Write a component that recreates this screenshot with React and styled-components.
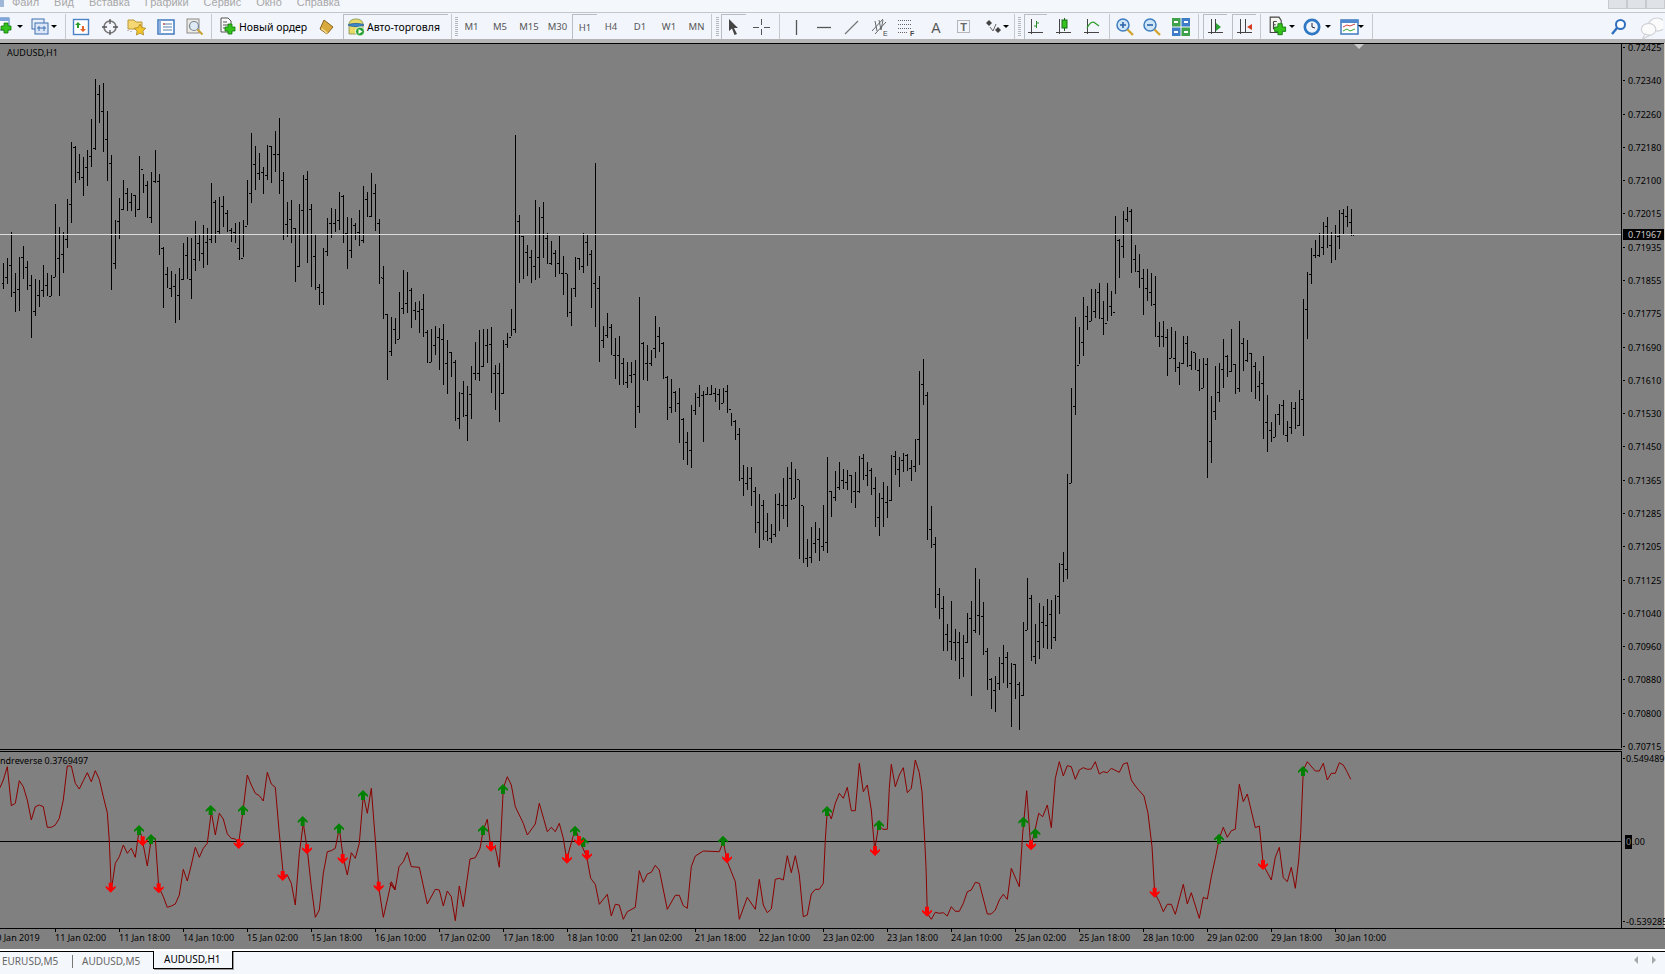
import styled, { createGlobalStyle } from "styled-components";

const GlobalStyle = createGlobalStyle`
  html, body {
    margin: 0;
    padding: 0;
    background: #f4f7fc;
    overflow: hidden;
  }
`;

// hi, lo, close per bar, measured off the reference. y = y0 + value / s
const BAR_TRACES = [
  {
    y0: 60,
    s: 3,
    open: 670,
    rows: [
      610,686,652, 595,673,616, 517,712,697, 640,755,688, 590,752,592, 558,656,620, 603,690,676, 645,833,752,
      657,768,704, 660,740,690, 615,712,675, 640,708,708, 645,708,650, 432,650,595, 502,708,582, 517,638,536,
      418,563,433, 247,490,262, 258,368,337, 282,360,350, 290,407,320, 270,377,288, 178,320,265, 57,270,103,
      75,190,152, 69,275,237, 153,362,310, 285,689,610, 480,626,482, 415,536,448, 360,450,400, 385,452,425,
      398,452,405, 405,470,448, 288,450,328, 343,398,375, 362,475,472, 335,490,362, 270,368,364, 343,584,563,
      562,743,643, 620,685,685, 633,712,678, 642,790,705, 625,780,658, 550,660,585, 530,658,658, 533,716,598,
      483,632,550, 522,602,580, 495,625,547, 503,614,538, 370,550,427, 420,550,512, 410,526,437, 408,502,458,
      450,515,510, 505,545,517, 490,550,565, 487,600,593, 480,592,497, 360,495,400, 220,428,313, 258,390,340,
      278,360,335, 322,402,345, 255,360,257, 258,368,283, 213,335,283, 175,402,360, 337,540,493, 427,530,477,
      420,548,505, 505,665,617, 432,620,450, 345,525,357, 333,610,447, 432,680,588, 522,690,680, 673,734,697,
      565,735,572, 475,587,488, 445,533,490, 447,515,480, 397,510,408, 405,550,520, 470,626,570, 475,595,495,
      490,540,515, 450,558,540, 378,550,418, 395,470,467, 340,470,400, 373,512,490, 478,673,652,
    ],
  },
  {
    y0: 120,
    s: 3,
    open: 473,
    rows: [
      438,597,583, 583,780,694, 590,708,626, 593,673,658, 516,658,565, 450,582,550, 456,580,510, 505,624,570,
      546,600,574, 543,640,567, 522,650,637, 630,728,725, 628,725,676, 618,705,652, 625,750,657, 612,795,730,
      660,822,695, 695,770,725, 720,902,895, 815,927,820, 783,890,885, 797,962,823, 738,898,760, 665,780,760,
      630,782,738, 628,740,675, 628,730,672, 622,818,758, 735,870,760, 728,905,818, 660,822,672, 640,685,650,
      567,648,627, 45,640,303, 285,488,348, 348,477,397, 375,468,412, 390,488,438, 240,480,412, 262,473,290,
      246,413,355, 338,432,428, 362,435,400, 390,470,430, 348,462,458, 407,525,460, 462,590,575,
      505,617,503, 410,530,415, 415,450,438, 338,458,365, 342,437,403, 390,563,490, 130,620,505, 468,725,660,
      617,685,645, 578,655,622, 612,706,705, 655,777,705, 648,795,730, 713,795,785, 725,805,765, 727,790,762,
      720,923,858, 532,878,668, 665,780,730, 675,782,730, 690,738,685, 588,713,648, 620,695,670, 665,778,770, 768,900,862,
      778,880,815, 812,875,848, 805,970,897, 895,1020,967, 935,1035,990, 855,1045,870, 820,885,830, 795,862,825,
      812,967,823, 800,825,822, 795,825,820, 805,845,822, 808,870,850, 805,850,813, 795,880,868, 880,918,902,
      900,960,942, 925,1082,1075, 1035,1127,1090, 1042,1110,1075, 1040,1157,1113, 1100,1240,1205, 1122,1283,1155, 1140,1260,1232,
      1178,1263,1255, 1212,1268,1243, 1122,1250,1153, 1120,1232,1155, 1075,1198,1155, 1040,1222,1075, 1025,1140,1135, 1048,1135,1078,
      1080,1317,1155, 1157,1330,1315, 1258,1342,1312, 1220,1328,1268, 1205,1300,1258, 1225,1322,1278, 1155,1292,1265, 1010,1298,1113,
      1113,1192,1130, 1052,1142,1100, 1025,1110,1080, 1047,1108,1085, 1050,1110,1065, 1065,1148,1113, 1055,1163,1112, 1008,1120,1015,
      1003,1080,1065, 1025,1098,1050, 1045,1125,1105, 1072,1222,1192, 1118,1247,1135, 1087,1220,1145, 1098,1193,1140, 1005,1142,1008,
      993,1065,1047, 1010,1102,1020, 1000,1057,1005, 1003,1052,1045, 1020,1082,1037, 957,1055,958,
    ],
  },
  {
    y0: 190,
    s: 2.85,
    open: 710,
    rows: [
      517,783,552, 482,612,585, 576,997,967, 902,1020,1010, 990,1190,1150, 1133,1222,1190, 1158,1315,1265, 1238,1313,1285,
      1170,1340,1287, 1250,1342,1288, 1260,1393,1335, 1267,1387,1288, 1205,1290,1220, 1170,1442,1255, 1078,1262,1210, 1110,1268,1215,
      1175,1325,1315, 1305,1425,1395, 1390,1480,1425, 1385,1487,1405, 1330,1425,1347, 1297,1405,1330, 1317,1418,1405, 1348,1530,1350,
      1350,1450,1408, 1403,1540,1440, 1230,1442,1255, 1107,1255,1162, 1153,1342,1327, 1237,1350,1285, 1176,1337,1230, 1187,1306,1240,
      1167,1308,1207, 1168,1308,1273, 1155,1285,1158, 1062,1208,1065, 1033,1118,1080, 810,1110,835, 565,835,615, 363,640,500,
      390,495,432, 305,472,360, 332,398,372, 282,372,345, 282,365,292, 265,367,365, 315,412,380, 265,372,332,
      288,358,348, 75,297,143, 140,250,160, 60,195,82, 48,90,60, 55,237,198, 157,235,232, 182,278,252,
      225,355,280, 225,315,292, 237,330,325, 245,418,415, 375,447,415, 373,447,420, 395,530,478, 390,480,480,
      402,518,505, 490,555,492, 417,497,437, 417,505,500, 460,512,462, 465,512,512, 483,572,563, 480,565,495,
      480,820,715, 587,778,630, 503,655,577, 493,603,510, 425,563,472, 470,532,515, 397,518,495, 495,582,563,
      372,575,435, 422,517,485, 428,490,465, 465,575,503, 490,597,560, 517,600,550, 473,710,662, 583,748,685,
      660,717,705, 637,705,638, 610,670,613, 598,697,697, 657,717,675, 605,695,622, 605,680,670, 570,672,597,
      310,700,338, 235,425,240, 165,267,185, 143,195,185, 123,190,163, 90,185,103, 78,165,158, 120,207,125,
      100,200,130, 58,167,65, 55,125,75, 45,105,90, 55,130,127,
    ],
  },
];

function buildBars() {
  const bars = [];
  BAR_TRACES.forEach(({ y0, s, open, rows }) => {
    let prev = y0 + open / s;
    for (let i = 0; i < rows.length; i += 3) {
      const close = y0 + rows[i + 2] / s;
      bars.push({
        x: 3 + bars.length * 4,
        hi: Math.round(y0 + rows[i] / s),
        lo: Math.round(y0 + rows[i + 1] / s),
        open: Math.round(prev),
        close: Math.round(close),
      });
      prev = close;
    }
  });
  return bars;
}

const barsPath = buildBars()
  .map(({ x, hi, lo, open, close }) => {
    const c = x + 0.5;
    return `M${c} ${hi}V${lo}M${c - 1} ${open + 0.5}h-1M${c + 1} ${close + 0.5}h1`;
  })
  .join("");

// indicator line, one list per crop of the reference
const LINE_TRACES = [
  {
    x0: 0,
    y0: 740,
    pts: [0,143,10,120,22,80,34,197,46,190,58,122,70,140,82,180,94,240,106,200,118,195,130,200,142,262,154,262,166,255,178,235,190,180,202,78,214,78,226,130,238,147,250,122,262,98,274,125,286,92,298,118,310,170,322,218,328,303,334,450,346,370,358,350,370,315,382,340,394,325,406,352,418,265,426,295,442,378,454,295,466,295,476,440,490,470,502,502,514,498,526,492,538,465,550,388,562,423,574,375,586,322,598,352,610,325,622,310,634,215,646,285,658,220,670,237,682,282,694,295,706,297,716,310,730,205,742,105,754,135,766,160,778,167,790,183,802,97,814,132,826,142,838,280,850,405,862,405,874,430,886,495,898,340,910,250,922,330,934,440,946,532,958,510,970,400,982,335,994,332,1006,325,1018,265,1030,355,1042,405,1054,338,1066,355,1078,310,1090,165,1102,220,1114,145,1126,300,1136,440,1150,532,1162,480,1174,425,1186,448],
  },
  {
    x0: 390,
    y0: 750,
    pts: [0,400,15,420,27,350,40,335,52,307,64,350,88,352,112,462,136,418,148,420,160,468,172,423,184,440,196,512,208,408,220,470,240,327,256,323,270,295,280,240,292,208,302,290,316,293,328,352,340,115,352,80,364,105,376,170,400,220,412,255,436,222,448,160,472,245,484,232,496,245,508,220,520,265,530,328,556,235,568,270,590,320,602,385,616,403,628,463,652,433,664,498,676,463,688,465,700,508,712,485,736,472,748,362,760,397,772,372,784,367,796,346,808,360,832,478,856,436,868,436,880,467,892,475,904,350,916,318,940,303,988,305,1000,275,1012,335,1024,365,1036,395,1048,508,1072,442,1096,478,1108,388,1120,465,1132,488,1144,477,1156,388,1168,385,1180,390,1192,317,1204,368,1216,317,1228,375,1240,500,1252,495,1264,432,1276,418,1288,418,1300,400,1306,270,1312,180,1324,207,1336,160,1348,130,1360,145,1372,112,1384,182,1396,182,1408,40,1420,125,1432,105,1444,180,1454,300,1466,225,1478,238],
  },
  {
    x0: 880,
    y0: 750,
    pts: [22,238,28,115,34,43,46,110,58,75,70,53,82,128,94,115,106,30,118,68,126,125,134,270,138,350,142,490,154,508,166,487,178,490,190,488,202,498,214,470,226,484,238,484,250,460,262,425,274,420,286,397,298,400,322,492,334,492,346,480,358,450,370,433,382,448,394,355,418,410,428,250,440,122,452,290,464,245,476,190,488,200,502,165,514,233,526,85,538,35,550,78,562,47,574,50,586,88,598,60,610,53,622,58,634,57,646,35,658,72,670,65,682,68,694,55,718,67,730,42,742,38,754,90,766,108,778,122,792,138,804,190,816,290,824,428,838,455,850,485,862,463,874,463,886,493,910,403,922,462,934,428,958,505,970,442,982,447,994,380,1006,325,1018,265,1030,232,1042,262,1054,242,1066,238,1078,103,1090,155,1102,132,1126,233,1138,228,1150,345,1174,390,1186,322,1198,292,1210,383,1222,395,1234,352,1246,415,1256,330,1262,250,1270,60,1282,35,1306,63,1318,63,1330,40,1342,90,1354,70,1366,70,1378,38,1390,45,1402,67,1412,88],
  },
];

const linePoints = LINE_TRACES.flatMap(({ x0, y0, pts }) => {
  const out = [];
  for (let i = 0; i < pts.length; i += 2) {
    out.push(`${(x0 + pts[i] / 3).toFixed(1)},${(y0 + pts[i + 1] / 3).toFixed(1)}`);
  }
  return out;
}).join(" ");

const UP_ARROWS = [
  [0,740,417,270],[0,740,453,297],[0,740,632,210],[0,740,729,210],[0,740,908,243],[0,740,1017,265],[0,740,1089,165],
  [390,750,279,240],[390,750,339,117],[390,750,555,242],[390,750,580,276],[390,750,999,272],[390,750,1311,183],[390,750,1467,225],
  [880,750,430,215],[880,750,466,250],[880,750,1017,266],[880,750,1269,63],
];
const DOWN_ARROWS = [
  [0,740,332,443],[0,740,428,304],[0,740,476,445],[0,740,716,312],[0,740,848,408],[0,740,921,328],[0,740,1028,357],[0,740,1136,440],
  [390,750,303,290],[390,750,531,326],[390,750,567,273],[390,750,591,316],[390,750,1011,325],[390,750,1455,303],
  [880,750,141,485],[880,750,453,286],[880,750,824,428],[880,750,1149,345],
];

const arrowAt = ([x0, y0, x, y]) => `${x0 + x / 3},${y0 + y / 3}`;
const UP_SHAPE = "M0 -5L5 0V2L2 0V5H-2V0L-5 2V0Z";
const DOWN_SHAPE = "M0 5L5 0V-2L2 0V-5H-2V0L-5 -2V0Z";

const PRICES = [
  "0.72425","0.72340","0.72260","0.72180","0.72100","0.72015","0.71935","0.71855","0.71775","0.71690","0.71610",
  "0.71530","0.71450","0.71365","0.71285","0.71205","0.71125","0.71040","0.70960","0.70880","0.70800","0.70715",
];

const TIMES = [
  "10 Jan 2019","11 Jan 02:00","11 Jan 18:00","14 Jan 10:00","15 Jan 02:00","15 Jan 18:00","16 Jan 10:00","17 Jan 02:00",
  "17 Jan 18:00","18 Jan 10:00","21 Jan 02:00","21 Jan 18:00","22 Jan 10:00","23 Jan 02:00","23 Jan 18:00","24 Jan 10:00",
  "25 Jan 02:00","25 Jan 18:00","28 Jan 10:00","29 Jan 02:00","29 Jan 18:00","30 Jan 10:00",
];

const MENU = ["Файл", "Вид", "Вставка", "Графики", "Сервис", "Окно", "Справка"];

const TIMEFRAMES = [
  ["M1", 27], ["M5", 30], ["M15", 28], ["M30", 29], ["H1", 25], ["H4", 28], ["D1", 30], ["W1", 28], ["MN", 27],
];

const Svg = ({ children, size = 20 }) => (
  <svg width={size} height={size} viewBox="0 0 20 20" style={{ flexShrink: 0 }}>
    {children}
  </svg>
);

const Plus = ({ x = 10, y = 10 }) => (
  <path
    d={`M${x + 3} ${y}h4v3h3v4h-3v3h-4v-3h-3v-4h3z`}
    fill="#35c21c"
    stroke="#0f7a0a"
    strokeWidth=".8"
  />
);

const AddChartIcon = () => (
  <Svg>
    <rect x="1" y="1" width="13" height="12" fill="#fff" stroke="#3f6fb0" />
    <rect x="1" y="1" width="13" height="3" fill="#7ea6dc" />
    <Plus x={6} y={6} />
  </Svg>
);
const ProfilesIcon = () => (
  <Svg>
    <rect x="2" y="2" width="12" height="10" fill="#eaf1fb" stroke="#3f6fb0" />
    <rect x="5" y="6" width="13" height="11" fill="#dbe7f8" stroke="#3f6fb0" />
    <path d="M7 11h9M9 9v5M14 9v5" stroke="#3f6fb0" fill="none" />
  </Svg>
);
const MarketIcon = () => (
  <Svg>
    <rect x="2.5" y="2.5" width="15" height="15" fill="#fff" stroke="#4a82c8" strokeWidth="1.4" />
    <path d="M7 5l3 3H8v3H6V8H4z" fill="#2a9d2a" />
    <path d="M12 15l3-3h-2V9h-2v3H9z" fill="#e2622a" />
  </Svg>
);
const TargetIcon = () => (
  <Svg>
    <circle cx="10" cy="10" r="6" fill="none" stroke="#777" strokeWidth="1.6" />
    <path d="M10 2v5M10 13v5M2 10h5M13 10h5" stroke="#555" strokeWidth="1.3" />
  </Svg>
);
const FolderStarIcon = () => (
  <Svg>
    <path d="M1 3h6l2 2h6v7H1z" fill="#f5d774" stroke="#b8963a" />
    <path d="M1 13v2M4 14v2" stroke="#888" strokeDasharray="1 1" />
    <path d="M13 7l1.8 3.6 4 .6-2.9 2.8.7 4-3.6-1.9-3.6 1.9.7-4-2.9-2.8 4-.6z" fill="#f3c52c" stroke="#a98422" strokeWidth=".8" />
  </Svg>
);
const TerminalIcon = () => (
  <Svg>
    <rect x="2" y="3" width="16" height="14" fill="#fff" stroke="#3f78c0" strokeWidth="1.5" />
    <path d="M4 3.5v13" stroke="#8fb2e0" strokeWidth="2" />
    <path d="M7 7h9M7 10h9M7 13h9" stroke="#5a7ea8" />
    <path d="M7 7h2" stroke="#d33" />
  </Svg>
);
const TesterIcon = () => (
  <Svg>
    <rect x="2" y="2" width="12" height="14" fill="#eceae4" stroke="#8a8a8a" />
    <circle cx="9" cy="9" r="4.5" fill="#dfeaf4" stroke="#7b8794" strokeWidth="1.2" />
    <path d="M12.5 12.5l5 5" stroke="#c8a032" strokeWidth="2" />
  </Svg>
);
const OrderIcon = () => (
  <Svg>
    <path d="M2 1h7l3 3v11H2z" fill="#fbfbfb" stroke="#555" />
    <path d="M4 5h4M4 8h6M4 11h3" stroke="#555" />
    <Plus x={6} y={7} />
  </Svg>
);
const EditorIcon = () => (
  <Svg>
    <path d="M7 3l9 7-6 7-7-5z" fill="#d8a93c" stroke="#8a641a" />
    <path d="M4 12l6 5 1-1-6-5z" fill="#f4dc94" />
  </Svg>
);
const AutoIcon = () => (
  <Svg>
    <path d="M3 7c0-3 3-5 7-5s7 2 7 5v10H3z" fill="#e9d96a" stroke="#7e8f50" strokeWidth=".8" />
    <path d="M2 8c2-2 14-2 16 0-3 2-13 2-16 0z" fill="#3f88c8" stroke="#235f99" strokeWidth=".8" />
    <circle cx="14" cy="14.5" r="4.5" fill="#2aa235" stroke="#fff" />
    <path d="M12.5 12l4 2.5-4 2.5z" fill="#fff" />
  </Svg>
);
const CursorIcon = () => (
  <Svg>
    <path d="M5 2l9 9h-4l3 6-2.5 1-2.5-6.5L5 14z" fill="#444" />
  </Svg>
);
const CrossIcon = () => (
  <Svg>
    <path d="M10.5 2v6M10.5 12v6M2 10.5h6M13 10.5h6" stroke="#555" />
  </Svg>
);
const VLineIcon = () => (
  <Svg>
    <path d="M10.5 3v15" stroke="#555" strokeWidth="1.3" />
  </Svg>
);
const HLineIcon = () => (
  <Svg>
    <path d="M3 10.5h14" stroke="#555" strokeWidth="1.3" />
  </Svg>
);
const DiagIcon = () => (
  <Svg>
    <path d="M3 17L16 4" stroke="#777" strokeWidth="1.2" />
  </Svg>
);
const ChannelIcon = () => (
  <Svg>
    <path d="M2 14L13 2M5 17L16 5M5 4l2 10M9 3l2 10M13 3l-2 10" stroke="#666" fill="none" />
    <text x="13" y="19" fontSize="7" fontFamily="Liberation Sans" fill="#444">E</text>
  </Svg>
);
const FiboIcon = () => (
  <Svg>
    <path d="M1 3.5h14M1 7.5h14M1 11.5h14M1 15.5h10" stroke="#666" strokeDasharray="1 1" />
    <text x="13" y="19" fontSize="7" fontWeight="700" fontFamily="Liberation Sans" fill="#444">F</text>
  </Svg>
);
const TextIcon = () => (
  <Svg>
    <text x="10" y="16" fontSize="14" textAnchor="middle" fontFamily="Liberation Sans" fill="#555">A</text>
  </Svg>
);
const LabelIcon = () => (
  <Svg>
    <rect x="3.5" y="3.5" width="12" height="12" fill="none" stroke="#777" strokeDasharray="1 1" />
    <text x="9.5" y="14" fontSize="11" fontWeight="700" textAnchor="middle" fontFamily="Liberation Sans" fill="#666">T</text>
  </Svg>
);
const ShapesIcon = () => (
  <Svg>
    <path d="M5 3l3 3-3 3-3-3z" fill="#444" />
    <path d="M14 10l3 3-3 3-3-3z" fill="#444" />
    <path d="M6 10l3 4 3-7" stroke="#666" fill="none" />
  </Svg>
);
const Axes = () => <path d="M5.5 2v15M2 15.5h15" stroke="#444" fill="none" />;
const BarChartIcon = () => (
  <Svg>
    <Axes />
    <path d="M10.5 4v7M8 9h2M11 6h2" stroke="#2a8c2a" fill="none" />
  </Svg>
);
const CandleIcon = () => (
  <Svg>
    <Axes />
    <path d="M10.5 1v13" stroke="#1a5e1a" />
    <rect x="8" y="3" width="5" height="8" fill="#35c21c" stroke="#1a6e1a" />
  </Svg>
);
const LineChartIcon = () => (
  <Svg>
    <Axes />
    <path d="M5 11c3-6 6-7 8-5l4 3" stroke="#2a9d2a" fill="none" strokeWidth="1.2" />
  </Svg>
);
const Magnifier = ({ sign }) => (
  <Svg>
    <circle cx="8" cy="8" r="6" fill="#cfe5f8" stroke="#3f7dc0" strokeWidth="1.5" />
    <path d={sign === "+" ? "M5 8h6M8 5v6" : "M5 8h6"} stroke="#2c62a6" strokeWidth="1.6" />
    <path d="M12.5 12.5l5.5 5.5" stroke="#d0a532" strokeWidth="2.4" />
  </Svg>
);
const TileIcon = () => (
  <Svg>
    <rect x="1" y="1" width="8.5" height="8.5" fill="#3fa24a" />
    <rect x="10.5" y="1" width="8.5" height="8.5" fill="#3f7dc8" />
    <rect x="1" y="10.5" width="8.5" height="8.5" fill="#3f7dc8" />
    <rect x="10.5" y="10.5" width="8.5" height="8.5" fill="#3fa24a" />
    <path d="M3 5h4M13 5h4M3 15h4M13 15h4" stroke="#fff" strokeWidth="2" />
  </Svg>
);
const ShiftGreenIcon = () => (
  <Svg>
    <Axes />
    <path d="M10 6l5 4-5 4z" fill="#2aa235" />
    <path d="M9.5 2v13" stroke="#444" />
  </Svg>
);
const ShiftRedIcon = () => (
  <Svg>
    <Axes />
    <path d="M10.5 2v13" stroke="#444" />
    <path d="M17 7l-5 3 5 3z" fill="#d5391f" />
  </Svg>
);
const TemplateIcon = () => (
  <Svg size={22}>
    <path d="M2 1h8l2 3v11H2z" fill="#f4f4f0" stroke="#444" />
    <path d="M5 5h3M5 8h2M5 5v7" stroke="#444" fill="none" />
    <Plus x={6} y={7} />
  </Svg>
);
const ClockIcon = () => (
  <Svg>
    <circle cx="10" cy="10" r="8.5" fill="#2f78c4" />
    <circle cx="10" cy="10" r="5.8" fill="#eef4fb" />
    <path d="M10 6v4l3 1" stroke="#223" fill="none" />
  </Svg>
);
const IndicatorIcon = () => (
  <Svg>
    <rect x="1" y="3" width="17" height="14" fill="#fff" stroke="#3f78c0" strokeWidth="1.5" />
    <rect x="1" y="3" width="17" height="3" fill="#4f8ad0" />
    <path d="M3 10l4-2 3 1 5-2" stroke="#c44" fill="none" />
    <path d="M3 14l4-2 3 2 5-2" stroke="#3a3" fill="none" />
  </Svg>
);
const SearchIcon = () => (
  <Svg>
    <circle cx="11.5" cy="7.5" r="4.5" fill="#fff" stroke="#2f6fc0" strokeWidth="2" />
    <path d="M8 11l-5 6" stroke="#2f6fc0" strokeWidth="2.4" />
  </Svg>
);
const ChatIcon = () => (
  <Svg size={24}>
    <ellipse cx="15" cy="8" rx="7" ry="5.5" fill="#fbfbfb" stroke="#cfd2d6" />
    <ellipse cx="8" cy="12" rx="6" ry="5" fill="#fbfbfb" stroke="#cfd2d6" />
    <path d="M5 16l-2 4 6-3z" fill="#fbfbfb" stroke="#cfd2d6" />
  </Svg>
);

export default function App() {
  return (
    <Page>
      <GlobalStyle />
      <MenuBar>
        <AppIcon />
        {MENU.map((item) => (
          <MenuItem key={item}>{item}</MenuItem>
        ))}
        <WindowButtons>
          <WindowButton />
          <WindowButton />
          <WindowButton />
        </WindowButtons>
      </MenuBar>

      <Toolbar>
        <ToolButton $w={18} $ml={-4}><AddChartIcon /></ToolButton>
        <Caret $w={12} />
        <ToolButton $w={18} $ml={5}><ProfilesIcon /></ToolButton>
        <Caret $w={10} />
        <Separator $ml={6} />
        <ToolButton $w={28} $ml={1}><MarketIcon /></ToolButton>
        <ToolButton $w={30}><TargetIcon /></ToolButton>
        <ToolButton $w={24}><FolderStarIcon /></ToolButton>
        <ToolButton $w={34}><TerminalIcon /></ToolButton>
        <ToolButton $w={24}><TesterIcon /></ToolButton>
        <Separator $ml={4} />
        <LabelButton $w={104}>
          <OrderIcon />
          Новый ордер
        </LabelButton>
        <ToolButton $w={22}><EditorIcon /></ToolButton>
        <LabelButton $w={105} $ml={5} $pressed>
          <AutoIcon />
          Авто-торговля
        </LabelButton>
        <Separator $ml={3} />
        <Grip $ml={3} />
        {TIMEFRAMES.map(([label, w]) => (
          <TimeframeButton key={label} $w={w} $pressed={label === "H1"}>
            {label}
          </TimeframeButton>
        ))}
        <Separator $ml={1} />
        <Grip $ml={4} />
        <ToolButton $w={25} $ml={2} $pressed><CursorIcon /></ToolButton>
        <ToolButton $w={30}><CrossIcon /></ToolButton>
        <Separator $ml={3} />
        <ToolButton $w={32}><VLineIcon /></ToolButton>
        <ToolButton $w={24}><HLineIcon /></ToolButton>
        <ToolButton $w={32}><DiagIcon /></ToolButton>
        <ToolButton $w={24}><ChannelIcon /></ToolButton>
        <ToolButton $w={30}><FiboIcon /></ToolButton>
        <ToolButton $w={28}><TextIcon /></ToolButton>
        <ToolButton $w={28}><LabelIcon /></ToolButton>
        <ToolButton $w={32}><ShapesIcon /></ToolButton>
        <Caret $w={11} $ml={-10} />
        <Separator $ml={3} />
        <Grip $ml={3} />
        <ToolButton $w={23} $ml={3} $pressed><BarChartIcon /></ToolButton>
        <ToolButton $w={34}><CandleIcon /></ToolButton>
        <ToolButton $w={22}><LineChartIcon /></ToolButton>
        <Separator $ml={6} />
        <ToolButton $w={30}><Magnifier sign="+" /></ToolButton>
        <ToolButton $w={24}><Magnifier sign="-" /></ToolButton>
        <ToolButton $w={34}><TileIcon /></ToolButton>
        <Separator />
        <ToolButton $w={24} $ml={4} $pressed><ShiftGreenIcon /></ToolButton>
        <ToolButton $w={24} $ml={5} $pressed><ShiftRedIcon /></ToolButton>
        <Separator $ml={4} />
        <ToolButton $w={20} $ml={8}><TemplateIcon /></ToolButton>
        <Caret $w={6} />
        <ToolButton $w={24} $ml={5}><ClockIcon /></ToolButton>
        <Caret $w={8} />
        <ToolButton $w={14} $ml={11}><IndicatorIcon /></ToolButton>
        <Caret $w={7} />
        <Separator $ml={8} />
        <ToolbarEnd>
          <SearchIcon />
          <ChatIcon />
        </ToolbarEnd>
      </Toolbar>

      <ToolbarEdge />

      <ChartRow>
        <PlotArea $h={704}>
          <ChartSvg width="1621" height="704" viewBox="0 44 1621 704">
            <path d={barsPath} stroke="#000" fill="none" shapeRendering="crispEdges" />
            <path d="M0 234.5H1621" stroke="#dcdcdc" shapeRendering="crispEdges" />
            <path d="M1354 44h10l-5 5z" fill="#c8c8c8" />
          </ChartSvg>
          <ChartTitle>AUDUSD,H1</ChartTitle>
        </PlotArea>
        <PriceAxis>
          {PRICES.map((price) => (
            <AxisLabel key={price}>{price}</AxisLabel>
          ))}
          <PriceTag>0.71967</PriceTag>
        </PriceAxis>
      </ChartRow>

      <PaneGap />

      <ChartRow>
        <PlotArea $h={176}>
          <ChartSvg width="1621" height="176" viewBox="0 752 1621 176">
            <path d="M0 841.5H1621" stroke="#000" shapeRendering="crispEdges" />
            <polyline points={linePoints} fill="none" stroke="#8b0000" strokeWidth="1" />
            {UP_ARROWS.map((a) => (
              <path key={a.join()} d={UP_SHAPE} fill="#008000" transform={`translate(${arrowAt(a)})`} />
            ))}
            {DOWN_ARROWS.map((a) => (
              <path key={a.join()} d={DOWN_SHAPE} fill="#ff0000" transform={`translate(${arrowAt(a)})`} />
            ))}
          </ChartSvg>
          <PaneTitle>ndreverse 0.3769497</PaneTitle>
        </PlotArea>
        <IndicatorAxis>
          <AxisLabel>0.549489</AxisLabel>
          <ZeroLabel>
            <ZeroMark>0</ZeroMark>.00
          </ZeroLabel>
          <AxisLabel>-0.539285</AxisLabel>
        </IndicatorAxis>
      </ChartRow>

      <TimeAxis>
        {TIMES.map((time) => (
          <TimeCell key={time}>{time}</TimeCell>
        ))}
      </TimeAxis>

      <TabStrip>
        <Tab>EURUSD,M5</Tab>
        <TabDivider />
        <Tab $wide>AUDUSD,M5</Tab>
        <ActiveTab>AUDUSD,H1</ActiveTab>
        <TabScroll>
          <svg width="6" height="8" viewBox="0 0 6 8"><path d="M5 0v8L1 4z" fill="#a8a8a8" /></svg>
          <svg width="6" height="8" viewBox="0 0 6 8"><path d="M1 0v8l4-4z" fill="#a8a8a8" /></svg>
        </TabScroll>
      </TabStrip>
    </Page>
  );
}

const Page = styled.div`
  width: 1665px;
  height: 974px;
  overflow: hidden;
  display: flex;
  flex-direction: column;
  background: #f4f7fc;
  font-family: "Noto Sans", "Liberation Sans", Arial, sans-serif;
`;

const MenuBar = styled.div`
  height: 12px;
  display: flex;
  overflow: hidden;
  background: #f4f7fc;
  border-bottom: 1px solid #c4c6c9;
  font-family: "Liberation Sans", Arial, sans-serif;
`;

const AppIcon = styled.div`
  width: 4px;
  height: 7px;
  background: #9fb8d8;
  margin-right: 8px;
`;

const MenuItem = styled.span`
  font-size: 11px;
  line-height: 12px;
  margin-top: -4px;
  margin-right: 15px;
  color: #a8a8a8;
`;

const WindowButtons = styled.div`
  margin-left: auto;
  display: flex;
  height: 9px;
`;

const WindowButton = styled.div`
  width: 17px;
  background: #dfe2e6;
  border: 1px solid #c8cacd;
  border-top: none;
`;

const Toolbar = styled.div`
  height: 26px;
  display: flex;
  align-items: stretch;
  background: #f2f6fc;
  padding-top: 1px;
  box-sizing: border-box;
`;

const ToolButton = styled.div`
  flex: 0 0 ${(p) => p.$w}px;
  width: ${(p) => p.$w}px;
  margin-left: ${(p) => p.$ml || 0}px;
  display: flex;
  align-items: center;
  justify-content: center;
  box-sizing: border-box;
  ${(p) => p.$pressed && "border-top: 1px solid #b9bdc4; border-left: 1px solid #b9bdc4;"}
`;

const LabelButton = styled(ToolButton)`
  justify-content: flex-start;
  padding-left: ${(p) => (p.$pressed ? 2 : 7)}px;
  font-size: 10.5px;
  color: #000;
  white-space: nowrap;

  svg {
    margin-right: ${(p) => (p.$pressed ? 1 : 0)}px;
  }
`;

const TimeframeButton = styled(ToolButton)`
  font-size: 9.5px;
  color: #555;
`;

const Caret = styled.div`
  flex: 0 0 ${(p) => p.$w}px;
  margin-left: ${(p) => p.$ml || 0}px;
  display: flex;
  align-items: center;
  justify-content: center;

  &::after {
    content: "";
    border-top: 3px solid #000;
    border-left: 3px solid transparent;
    border-right: 3px solid transparent;
  }
`;

const Separator = styled.div`
  flex: 0 0 1px;
  margin-left: ${(p) => p.$ml || 0}px;
  background: #c6c9ce;
`;

const Grip = styled.div`
  flex: 0 0 3px;
  margin-left: ${(p) => p.$ml || 0}px;
  margin-top: 3px;
  margin-bottom: 2px;
  background: repeating-linear-gradient(to bottom, #b4b7bc 0 1px, transparent 1px 2px);
`;

const ToolbarEnd = styled.div`
  margin-left: auto;
  margin-right: 2px;
  display: flex;
  align-items: center;
  gap: 10px;
`;

const ToolbarEdge = styled.div`
  height: 4px;
  background: #b4b4b4;
  border-bottom: 1px solid #000;
`;

const ChartRow = styled.div`
  display: flex;
  align-items: flex-start;
  background: #808080;
`;

const PlotArea = styled.div`
  position: relative;
  flex: 0 0 1621px;
  height: ${(p) => p.$h}px;
  overflow: hidden;
  border-right: 1px solid #000;
`;

const ChartSvg = styled.svg`
  display: block;
`;

const ChartTitle = styled.div`
  position: absolute;
  left: 7px;
  top: 3px;
  font-size: 9px;
  line-height: 11px;
  color: #000;
`;

const PaneTitle = styled.div`
  position: absolute;
  left: 0;
  top: 3px;
  font-size: 9px;
  line-height: 11px;
  color: #000;
  white-space: nowrap;
`;

const PriceAxis = styled.div`
  position: relative;
  flex: 1;
  min-width: 0;
  height: 708px;
  margin: -1px 0 -4px;
  display: flex;
  flex-direction: column;
  justify-content: space-between;
  padding-left: 1px;
  border-right: 1px solid #d4d0c8;
`;

const AxisLabel = styled.div`
  position: relative;
  height: 9px;
  line-height: 9px;
  padding-left: 5px;
  font-size: 9px;
  color: #000;
  white-space: nowrap;

  &::before {
    content: "";
    position: absolute;
    left: 0;
    top: 4px;
    width: 2px;
    height: 1px;
    background: #000;
  }
`;

const PriceTag = styled.div`
  position: absolute;
  left: 1px;
  right: 0;
  top: 186px;
  height: 11px;
  line-height: 11px;
  padding-left: 5px;
  font-size: 9px;
  color: #c8c8c8;
  background: #000;
`;

const PaneGap = styled.div`
  height: 4px;
  background:
    linear-gradient(#000, #000) 0 1px / 1622px 1px no-repeat,
    linear-gradient(#000, #000) 0 3px / 1622px 1px no-repeat,
    #808080;
`;

const IndicatorAxis = styled(PriceAxis)`
  height: 172px;
  margin: 0;
  padding-top: 2px;
  padding-bottom: 2px;

  ${AxisLabel} {
    padding-left: 3px;
  }
`;

const ZeroLabel = styled.div`
  height: 10px;
  line-height: 10px;
  margin-top: 4px;
  padding-left: 2px;
  font-size: 9px;
  color: #000;
`;

const ZeroMark = styled.span`
  background: #000;
  color: #888;
  padding: 0 1px 1px;
`;

const TimeAxis = styled.div`
  height: 21px;
  display: flex;
  margin-left: -9px;
  width: 1674px;
  background: #808080;
  border-top: 1px solid #000;
  box-sizing: border-box;
`;

const TimeCell = styled.div`
  position: relative;
  flex: 0 0 64px;
  padding-top: 3px;
  font-size: 9px;
  line-height: 11px;
  white-space: nowrap;
  color: #000;

  &::before {
    content: "";
    position: absolute;
    left: 0;
    top: 0;
    width: 1px;
    height: 3px;
    background: #000;
  }
`;

const TabStrip = styled.div`
  flex: 1;
  display: flex;
  align-items: flex-start;
  background: #f4f7fc;
  border-top: 1px solid #000;
  margin-top: 2px;
  box-shadow: 0 -2px 0 #fff;
`;

const Tab = styled.div`
  font-size: 10px;
  line-height: 16px;
  margin-top: 1px;
  padding-left: ${(p) => (p.$wide ? 9 : 2)}px;
  width: ${(p) => (p.$wide ? 80 : 72)}px;
  box-sizing: border-box;
  color: #666;
`;

const TabDivider = styled.div`
  width: 1px;
  height: 13px;
  margin-top: 3px;
  background: #777;
`;

const ActiveTab = styled.div`
  width: 80px;
  height: 18px;
  margin-top: -1px;
  box-sizing: border-box;
  padding-left: 10px;
  line-height: 17px;
  font-size: 10px;
  color: #000;
  background: #f4f7fc;
  border: 1px solid #000;
  border-top: none;
  box-shadow: 1px 1px 0 #9a9a9a;
`;

const TabScroll = styled.div`
  margin-left: auto;
  margin-right: 8px;
  margin-top: 4px;
  display: flex;
  gap: 12px;
`;
